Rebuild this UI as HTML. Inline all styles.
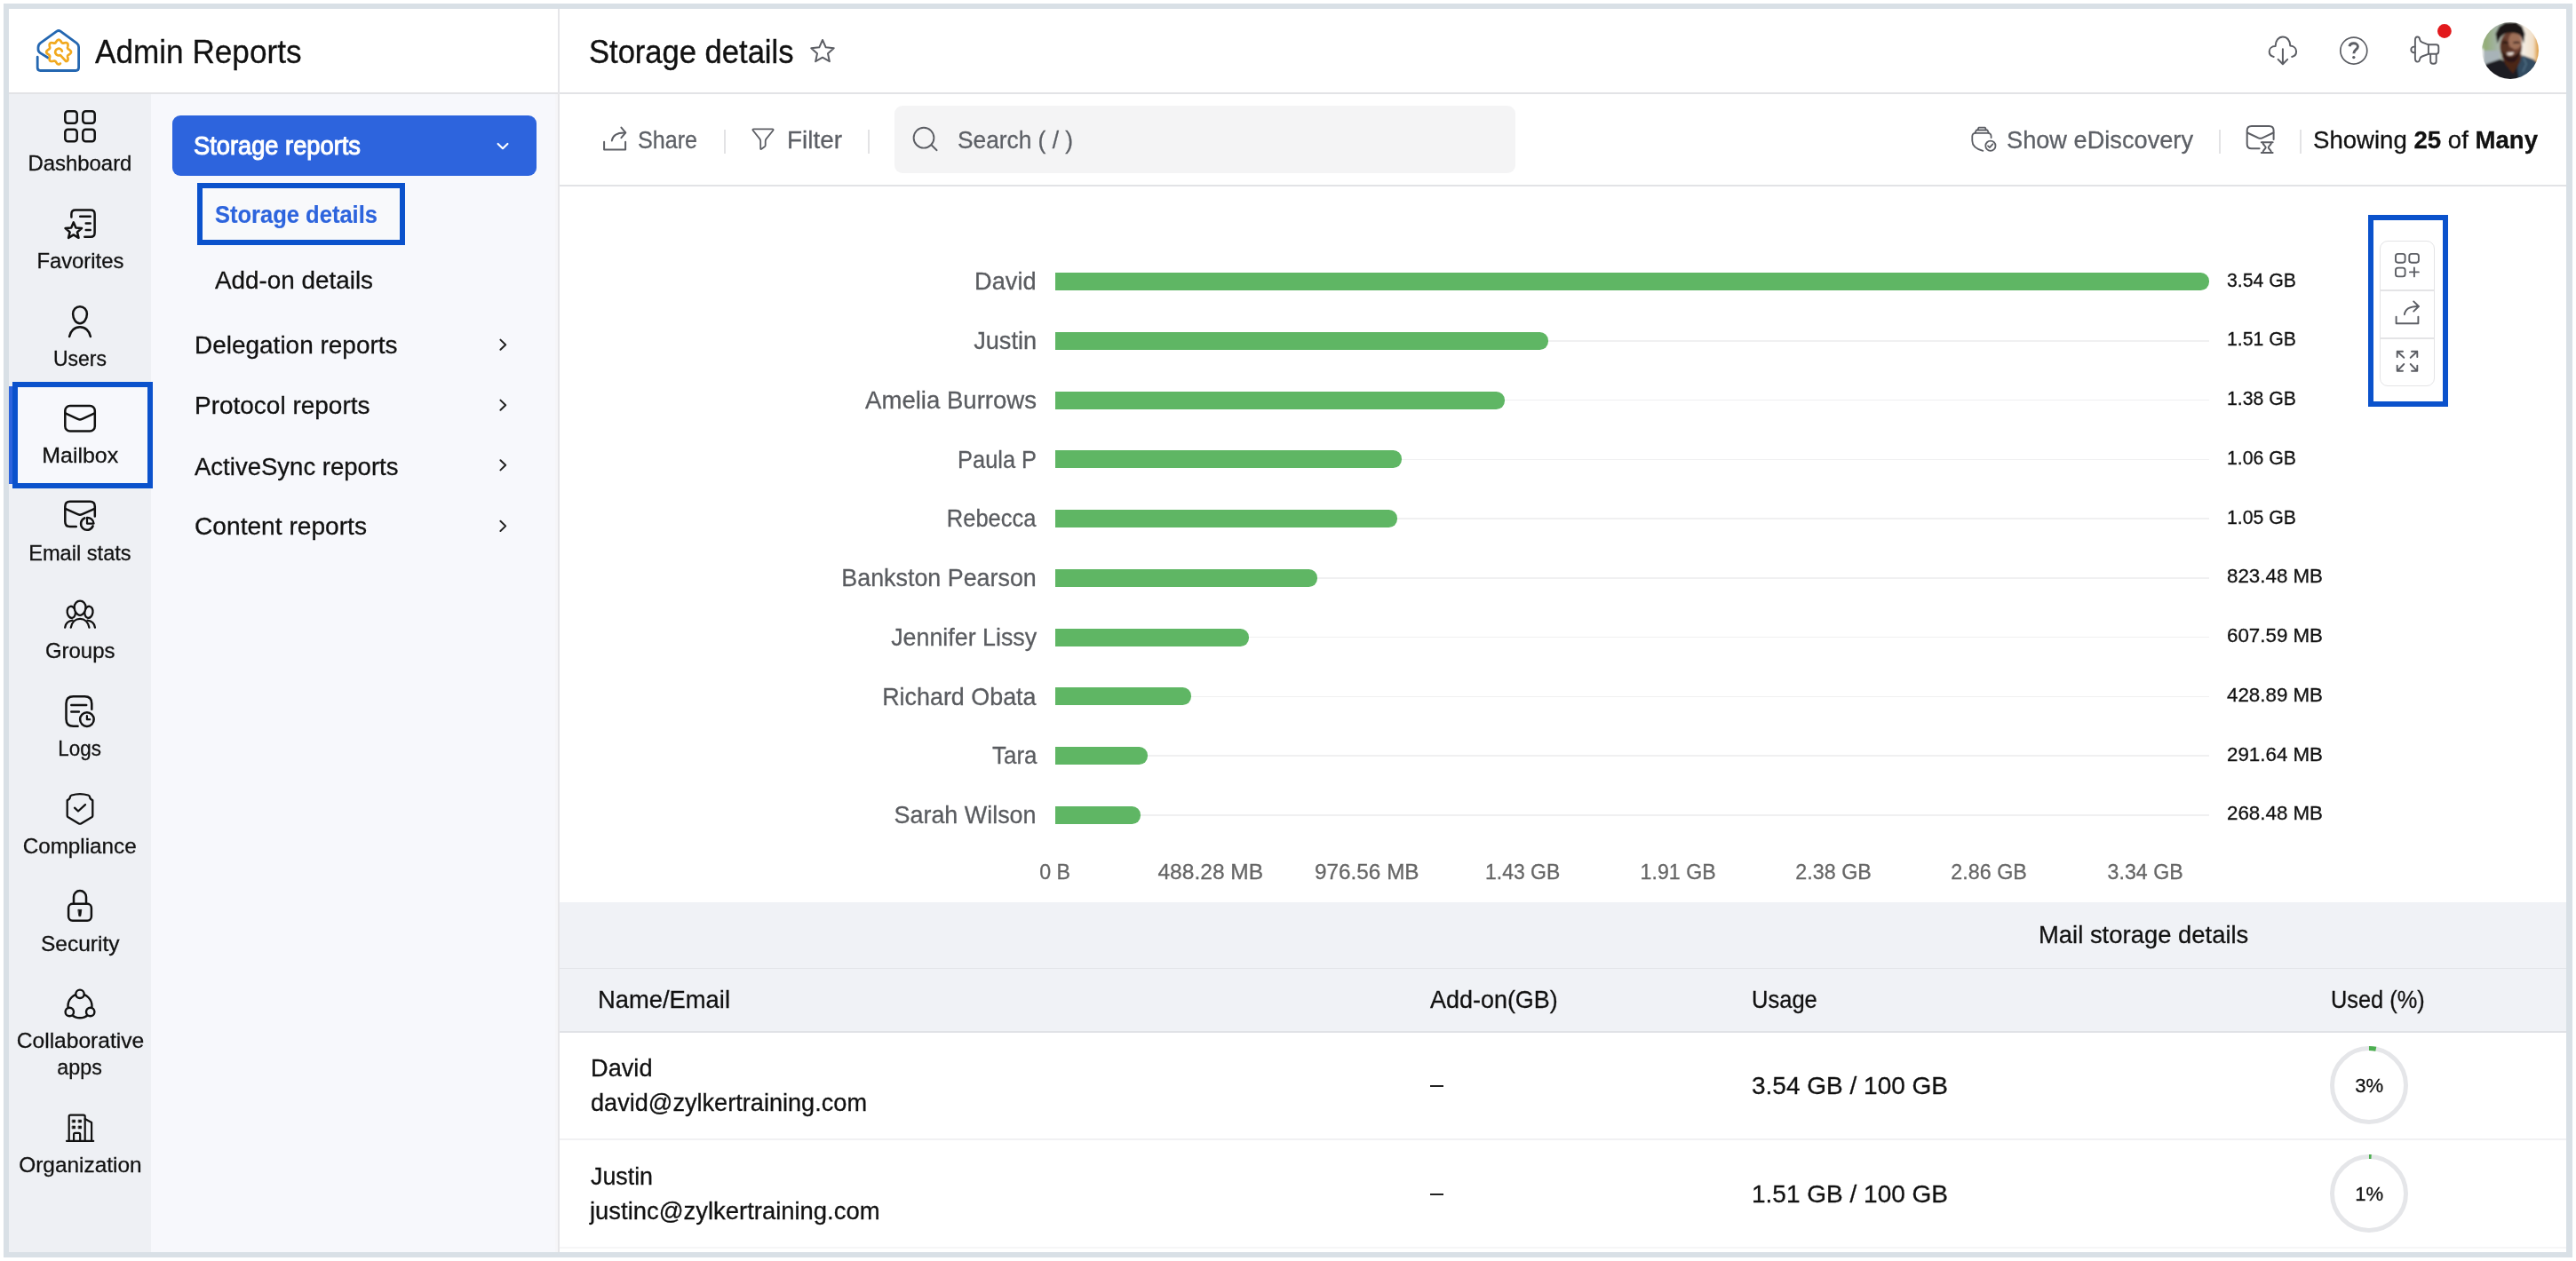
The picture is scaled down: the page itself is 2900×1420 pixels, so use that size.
<!DOCTYPE html>
<html lang="en"><head><meta charset="utf-8"><title>Admin Reports - Storage details</title>
<style>
html,body{margin:0;padding:0;background:#fff;}
body{width:2900px;height:1420px;overflow:hidden;font-family:"Liberation Sans",sans-serif;color:#111;}
#page{position:relative;width:2900px;height:1420px;overflow:hidden;background:#fff;}
#page div,#page span,#page svg{position:absolute;box-sizing:border-box;}
.t{-webkit-text-stroke:0.28px currentColor;white-space:nowrap;line-height:1;font-family:"Liberation Sans",sans-serif;color:#111;}
.t b{font-weight:700;}
svg{overflow:visible;}
.ic{fill:none;stroke:#111;stroke-width:2.6;stroke-linecap:round;stroke-linejoin:round;}
.ig{fill:none;stroke:#5c5e64;stroke-width:2.2;stroke-linecap:round;stroke-linejoin:round;}

</style></head>
<body>
<div id="page">
<!-- outer frame -->
<div style="left:4px;top:4px;width:2892px;height:1412px;border:solid #d9e0e6;border-width:6px 7px 6px 6px;"></div>
<!-- header -->
<div style="left:10px;top:10px;width:2879px;height:94px;background:#fff;"></div>
<div style="left:10px;top:104px;width:2879px;height:2px;background:#e2e3e6;"></div>
<!-- left icon rail -->
<div style="left:10px;top:106px;width:160px;height:1304px;background:#eef0f4;"></div>
<!-- submenu panel -->
<div style="left:170px;top:106px;width:458px;height:1304px;background:#f7f8fc;"></div>
<div style="left:624.5px;top:106px;width:3.5px;height:1304px;background:#f6f6f8;"></div>
<div style="left:628px;top:10px;width:2px;height:1400px;background:#e6e6e9;"></div>
<!-- active rail item -->
<div style="left:10px;top:435px;width:5px;height:110px;background:#2d64dd;"></div>
<div style="left:14px;top:430px;width:158px;height:120px;border:6px solid #0b52cc;background:#f7f8fc;"></div>
<!-- submenu -->
<div style="left:194px;top:130px;width:410px;height:68px;background:#2d64dd;border-radius:9px;"></div>
<div style="left:222px;top:206px;width:234px;height:70px;border:6px solid #0b52cc;background:#f8f9fb;"></div>
<!-- toolbar -->
<div style="left:630px;top:208px;width:2259px;height:2px;background:#e2e3e6;"></div>
<div style="left:815px;top:146px;width:2px;height:27px;background:#e3e3e5;"></div>
<div style="left:977px;top:146px;width:2px;height:27px;background:#e3e3e5;"></div>
<div style="left:2498px;top:146px;width:2px;height:27px;background:#e3e3e5;"></div>
<div style="left:2589px;top:146px;width:2px;height:27px;background:#e3e3e5;"></div>
<div style="left:1007px;top:119px;width:699px;height:76px;background:#f4f4f5;border-radius:9px;"></div>
<!-- chart tool box -->
<div style="left:2666px;top:242px;width:90px;height:216px;border:6px solid #0b52cc;"></div>
<div style="left:2679px;top:271px;width:62px;height:164px;border:1.5px solid #e4e4e6;border-radius:9px;background:#fff;"></div>
<div style="left:2680px;top:326px;width:60px;height:1.5px;background:#e4e4e6;"></div>
<div style="left:2680px;top:380px;width:60px;height:1.5px;background:#e4e4e6;"></div>
<!-- table -->
<div style="left:630px;top:1016px;width:2259px;height:146px;background:#f0f2f6;"></div>
<div style="left:630px;top:1089.5px;width:2259px;height:1.5px;background:#e2e4e8;"></div>
<div style="left:630px;top:1160.5px;width:2259px;height:2px;background:#e0e2e6;"></div>
<div style="left:630px;top:1282px;width:2259px;height:2px;background:#f1f1f3;"></div>
<div style="left:630px;top:1404px;width:2259px;height:2px;background:#f6f6f7;"></div>
<div style="left:1610px;top:1221.5px;width:15px;height:2.5px;background:#222;"></div>
<div style="left:1610px;top:1343.5px;width:15px;height:2.5px;background:#222;"></div>

<div style="left:2482.5px;top:316.40px;width:4.5px;height:1.4px;background:#f0f0f1;"></div>
<div style="left:1187.5px;top:307.00px;width:1299.0px;height:20px;background:#5fb664;border-radius:0 9.5px 9.5px 0;"></div>
<div style="left:1739px;top:383.15px;width:748px;height:1.4px;background:#f0f0f1;"></div>
<div style="left:1187.5px;top:373.75px;width:555.5px;height:20px;background:#5fb664;border-radius:0 9.5px 9.5px 0;"></div>
<div style="left:1689.75px;top:449.90px;width:797.25px;height:1.4px;background:#f0f0f1;"></div>
<div style="left:1187.5px;top:440.50px;width:506.25px;height:20px;background:#5fb664;border-radius:0 9.5px 9.5px 0;"></div>
<div style="left:1573.5px;top:516.65px;width:913.5px;height:1.4px;background:#f0f0f1;"></div>
<div style="left:1187.5px;top:507.25px;width:390.0px;height:20px;background:#5fb664;border-radius:0 9.5px 9.5px 0;"></div>
<div style="left:1569.25px;top:583.40px;width:917.75px;height:1.4px;background:#f0f0f1;"></div>
<div style="left:1187.5px;top:574.00px;width:385.75px;height:20px;background:#5fb664;border-radius:0 9.5px 9.5px 0;"></div>
<div style="left:1479px;top:650.15px;width:1008px;height:1.4px;background:#f0f0f1;"></div>
<div style="left:1187.5px;top:640.75px;width:295.5px;height:20px;background:#5fb664;border-radius:0 9.5px 9.5px 0;"></div>
<div style="left:1401.6px;top:716.90px;width:1085.4px;height:1.4px;background:#f0f0f1;"></div>
<div style="left:1187.5px;top:707.50px;width:218.0999999999999px;height:20px;background:#5fb664;border-radius:0 9.5px 9.5px 0;"></div>
<div style="left:1337.1px;top:783.65px;width:1149.9px;height:1.4px;background:#f0f0f1;"></div>
<div style="left:1187.5px;top:774.25px;width:153.5999999999999px;height:20px;background:#5fb664;border-radius:0 9.5px 9.5px 0;"></div>
<div style="left:1288px;top:850.40px;width:1199px;height:1.4px;background:#f0f0f1;"></div>
<div style="left:1187.5px;top:841.00px;width:104.5px;height:20px;background:#5fb664;border-radius:0 9.5px 9.5px 0;"></div>
<div style="left:1279.5px;top:917.15px;width:1207.5px;height:1.4px;background:#f0f0f1;"></div>
<div style="left:1187.5px;top:907.75px;width:96.0px;height:20px;background:#5fb664;border-radius:0 9.5px 9.5px 0;"></div>
<svg style="left:2617px;top:1172px" width="100" height="100" viewBox="2617 1172 100 100"><circle cx="2667" cy="1222" r="41.5" fill="none" stroke="#e5e6e9" stroke-width="5"/><path d="M2667 1180.5 A41.5 41.5 0 0 1 2674.78 1181.24" fill="none" stroke="#4caf50" stroke-width="5"/></svg>
<svg style="left:2617px;top:1294px" width="100" height="100" viewBox="2617 1294 100 100"><circle cx="2667" cy="1344" r="41.5" fill="none" stroke="#e5e6e9" stroke-width="5"/><path d="M2667 1302.5 A41.5 41.5 0 0 1 2669.61 1302.58" fill="none" stroke="#4caf50" stroke-width="5"/></svg>
<svg style="left:0;top:0" width="2900" height="1420" viewBox="0 0 2900 1420">
<g fill="none" stroke-linecap="round" stroke-linejoin="round" stroke-width="2.8">
<path stroke="#2467b1" d="M42.2 64.2 V76.3 Q42.2 79.5 45.4 79.5 H85.4 Q88.6 79.5 88.6 76.3 V53 Q88.6 50.2 86.4 48.6 L68 35.2 Q66 33.7 64 35.2 L45.6 48.3 Q43 50.2 43 53.4 V55.5 Q43 58.2 45.3 59.6 L54 65"/>
<path stroke="#f1a91f" stroke-width="2.7" d="M67.92 71.53 L67.28 72.10 L66.58 72.43 L65.86 72.48 L65.15 72.24 L64.49 71.74 L63.90 71.07 L63.39 70.33 L62.94 69.63 L62.49 69.07 L62.02 68.71 L61.46 68.56 L60.79 68.60 L60.00 68.75 L59.14 68.92 L58.24 69.03 L57.39 68.98 L56.66 68.72 L56.11 68.25 L55.78 67.57 L55.67 66.75 L55.73 65.86 L55.89 64.98 L56.06 64.16 L56.15 63.46 L56.06 62.86 L55.77 62.36 L55.27 61.91 L54.61 61.46 L53.88 60.98 L53.17 60.42 L52.60 59.78 L52.27 59.08 L52.22 58.36 L52.46 57.65 L52.96 56.99 L53.63 56.40 L54.37 55.89 L55.07 55.44 L55.63 54.99 L55.99 54.52 L56.14 53.96 L56.10 53.29 L55.95 52.50 L55.78 51.64 L55.67 50.74 L55.72 49.89 L55.98 49.16 L56.45 48.61 L57.13 48.28 L57.95 48.17 L58.84 48.23 L59.72 48.39 L60.54 48.56 L61.24 48.65 L61.84 48.56 L62.34 48.27 L62.79 47.77 L63.24 47.11 L63.72 46.38 L64.28 45.67 L64.92 45.10 L65.62 44.77 L66.34 44.72 L67.05 44.96 L67.71 45.46 L68.30 46.13 L68.81 46.87 L69.26 47.57 L69.71 48.13 L70.18 48.49 L70.74 48.64 L71.41 48.60 L72.20 48.45 L73.06 48.28 L73.96 48.17 L74.81 48.22 L75.54 48.48 L76.09 48.95 L76.42 49.63 L76.53 50.45 L76.47 51.34 L76.31 52.22 L76.14 53.04 L76.05 53.74 L76.14 54.34 L76.43 54.84 L76.93 55.29 L77.59 55.74 L78.32 56.22 L79.03 56.78 L79.60 57.42 L79.93 58.12 L79.98 58.84 L79.74 59.55 L79.24 60.21 L78.57 60.80 L77.83 61.31 L77.13 61.76 L76.57 62.21 L76.21 62.68 L76.06 63.24 L76.10 63.91 L76.25 64.70 L76.42 65.56 L76.53 66.46 L76.48 67.31 L76.22 68.04 L75.75 68.59 L75.07 68.92 L74.25 69.03 L67.93 62.04 A3.9 3.9 0 1 1 69.87 57.59"/>
</g>
<g class="ic" style="stroke-width:2.5">
<rect x="73.3" y="125.3" width="13.4" height="13.4" rx="3.2"/>
<rect x="73.3" y="145.8" width="13.4" height="13.4" rx="3.2"/>
<rect x="93.3" y="125.3" width="13.4" height="13.4" rx="3.2"/>
<rect x="93.3" y="145.8" width="13.4" height="13.4" rx="3.2"/>
<path d="M80.4 244.4 V241 Q80.4 236.5 84.9 236.5 H102.1 Q106.6 236.5 106.6 241 V262.2 Q106.6 266.7 102.1 266.7 H95.3"/>
<path d="M90.2 243.7 H101.7 M96.7 251.4 H101.7 M96.7 258.9 H101.7"/>
<path d="M82.80 250.30 L85.39 256.44 L92.03 257.00 L86.98 261.36 L88.50 267.85 L82.80 264.40 L77.10 267.85 L78.62 261.36 L73.57 257.00 L80.21 256.44Z"/>
<path d="M90 345.3 C94.6 345.3 97.9 349 97.9 353.6 C97.9 359 94.4 364.2 90 364.2 C85.6 364.2 82.1 359 82.1 353.6 C82.1 349 85.4 345.3 90 345.3 Z"/>
<path d="M78.1 379 C79.3 372.6 84 368.3 90 368.3 C96 368.3 100.7 372.6 101.9 379"/>
<rect x="73.3" y="457.1" width="33.5" height="28.4" rx="5.5"/>
<path d="M73.6 465.4 L87.6 471.9 Q90 473 92.4 471.9 L106.5 465.4"/>
<path d="M106.8 581.6 V570.2 Q106.8 564.7 101.3 564.7 H78.8 Q73.3 564.7 73.3 570.2 V587.6 Q73.3 593.1 78.8 593.1 H85.8"/>
<path d="M73.6 572.8 L87.6 579.1 Q90 580.2 92.4 579.1 L106.5 572.8"/>
<path d="M95.3 583.4 A7 7 0 1 0 104.6 592.3"/>
<path d="M98 582.8 V589.6 H105.6 A7.4 7.4 0 0 0 98 582.8 Z" style="stroke-width:2.2"/>
<ellipse cx="80.3" cy="689.3" rx="4.6" ry="6.6" transform="rotate(-8 80.3 689.3)" style="stroke-width:2.3"/>
<ellipse cx="99.9" cy="689.3" rx="4.6" ry="6.6" transform="rotate(8 99.9 689.3)" style="stroke-width:2.3"/>
<path d="M90.1 676.6 C93.8 676.6 96.5 679.8 96.5 683.6 C96.5 688.2 93.7 692.8 90.1 692.8 C86.5 692.8 83.7 688.2 83.7 683.6 C83.7 679.8 86.4 676.6 90.1 676.6 Z" fill="#eef0f4" style="fill:#eef0f4;stroke-width:2.3"/>
<path d="M79.8 706.6 C80.8 700.8 84.8 696.8 90.1 696.8 C95.4 696.8 99.4 700.8 100.4 706.6" style="stroke-width:2.3"/>
<path d="M73.2 706.6 C73.9 702.2 77 699.2 81.6 698.7 M106.9 706.6 C106.2 702.2 103.1 699.2 98.5 698.7" style="stroke-width:2.3"/>
<path d="M103.3 798.8 V792.3 Q103.3 784.3 95.3 784.3 H82.5 Q74.5 784.3 74.5 792.3 V809.7 Q74.5 817.7 82.5 817.7 H87.6"/>
<path d="M80.3 794 H97.2 M80.3 801.4 H88.9"/>
<circle cx="97.9" cy="810.1" r="7.8"/>
<path d="M97.9 806.2 V810.2 H101.2" style="stroke-width:2.2"/>
<path d="M75.7 901.2 Q78.6 900.2 78.9 897.6 Q79 896 80.6 895.5 Q90 892.6 99.4 895.5 Q101 896 101.1 897.6 Q101.4 900.2 104.3 901.2 V918.4 Q104.3 919.6 103.2 920.3 L91.6 927.2 Q90 928.1 88.4 927.2 L76.8 920.3 Q75.7 919.6 75.7 918.4 Z" style="stroke-width:2.3"/>
<path d="M84 909.7 L88 913.5 L96 906.1" style="stroke-width:2.3"/>
<rect x="77.1" y="1017.8" width="25.8" height="18.9" rx="4.6"/>
<path d="M83 1017.6 V1010.1 A7 7 0 0 1 97 1010.1 V1017.6"/>
<path d="M88.2 1024.4 H91.8 L90.8 1031.7 H89.2 Z" style="fill:#111;stroke-width:0.8"/>
<circle cx="90" cy="1132.8" r="13.5" style="stroke-width:2.4"/>
<circle cx="90" cy="1119.3" r="4.7" style="fill:#eef0f4;stroke-width:2.4"/>
<circle cx="78.3" cy="1139.5" r="4.7" style="fill:#eef0f4;stroke-width:2.4"/>
<circle cx="101.7" cy="1139.5" r="4.7" style="fill:#eef0f4;stroke-width:2.4"/>
<g style="stroke-width:2.2">
<path d="M75 1284.9 H105.2"/>
<path d="M77.7 1284.5 V1257.3 Q77.7 1255.6 79.4 1255.6 H94 Q95.7 1255.6 95.7 1257.3 V1284.5"/>
<path d="M95.7 1260.1 L103.1 1263.9 V1284.5"/>
<path d="M83.1 1284.5 V1277.4 Q83.1 1275.8 84.7 1275.8 H88.6 Q90.2 1275.8 90.2 1277.4 V1284.5"/>
<rect x="81.5" y="1261.1" width="3.2" height="2.9" style="fill:#111;stroke-width:0.6"/>
<rect x="81.5" y="1268" width="3.2" height="2.9" style="fill:#111;stroke-width:0.6"/>
<rect x="88.4" y="1261.1" width="3.2" height="2.9" style="fill:#111;stroke-width:0.6"/>
<rect x="88.4" y="1268" width="3.2" height="2.9" style="fill:#111;stroke-width:0.6"/>
</g>
</g>
<path d="M560.6 162 L566 167.2 L571.4 162" fill="none" stroke="#fff" stroke-width="2.2" stroke-linecap="round" stroke-linejoin="round"/>
<path d="M563.4 382.59999999999997 L569.2 388.2 L563.4 393.8" fill="none" stroke="#222" stroke-width="2" stroke-linecap="round" stroke-linejoin="round"/>
<path d="M563.4 450.59999999999997 L569.2 456.2 L563.4 461.8" fill="none" stroke="#222" stroke-width="2" stroke-linecap="round" stroke-linejoin="round"/>
<path d="M563.4 518.1999999999999 L569.2 523.8 L563.4 529.4" fill="none" stroke="#222" stroke-width="2" stroke-linecap="round" stroke-linejoin="round"/>
<path d="M563.4 586.8 L569.2 592.4 L563.4 598.0" fill="none" stroke="#222" stroke-width="2" stroke-linecap="round" stroke-linejoin="round"/>
<g class="ig" style="stroke-width:2">
<path d="M926.00 45.00 L929.70 53.30 L938.74 54.26 L931.99 60.35 L933.88 69.24 L926.00 64.70 L918.12 69.24 L920.01 60.35 L913.26 54.26 L922.30 53.30Z" style="stroke-width:2;stroke-linejoin:round"/>
<path d="M680.1 159.8 V168.5 H704.1 V159.8"/>
<path d="M688.8 158.4 C689.8 152.6 695.2 149.2 703.6 149.4"/>
<path d="M699.4 143.6 L704.3 149.4 L699.4 155.2"/>
<path d="M848.6 145.4 H869.4 Q871.4 145.4 870.2 147 L862.6 156.4 Q861.7 157.6 861.7 159 V163.4 Q861.7 164.6 860.7 165.3 L857.3 167.8 Q856.2 168.6 856.2 167.2 V159 Q856.2 157.6 855.3 156.4 L847.8 147 Q846.6 145.4 848.6 145.4 Z" style="stroke-width:1.8"/>
<circle cx="1040" cy="155.2" r="11.4" style="stroke-width:1.9"/>
<path d="M1048.6 163.3 L1054.6 169.2" style="stroke-width:1.9"/>
<g style="stroke-width:1.8">
<path d="M2241.6 155 V153.6 Q2241.6 149.8 2237.8 149.8 H2224.1 Q2220.3 149.8 2220.3 153.6 V158.4 C2220.3 163.6 2225 167.8 2232.4 169.8"/>
<path d="M2223.4 149.6 L2225 146.5 H2237.3 L2238.9 149.6 M2226.3 146.3 L2227.6 143.6 H2234.8 L2236.1 146.3"/>
<circle cx="2240.9" cy="164.2" r="5.6"/>
<path d="M2238 164.3 L2239.9 166.1 L2243.3 162.3"/>
</g>
<g style="stroke-width:2">
<path d="M2559.6 157 V147 Q2559.6 141.9 2554.5 141.9 H2534.8 Q2529.7 141.9 2529.7 147 V162.2 Q2529.7 167.3 2534.8 167.3 H2543.6"/>
<path d="M2530 149.5 L2542.4 155.3 Q2544.6 156.3 2546.8 155.3 L2559.3 149.5"/>
<path d="M2545.8 160.3 H2558.6 M2545.8 171.9 H2558.6"/>
<path d="M2547.4 160.6 C2547.6 163.4 2550.7 164.6 2550.7 166.1 C2550.7 167.6 2547.6 168.8 2547.4 171.6 M2557 160.6 C2556.8 163.4 2553.7 164.6 2553.7 166.1 C2553.7 167.6 2556.8 168.8 2557 171.6"/>
</g>
<g style="stroke-width:2">
<path d="M2559.8 63.9 C2556.6 63.3 2554.7 60.8 2554.7 58 C2554.7 54.8 2557.2 52.2 2561.6 52.1 C2561.6 45.8 2565.2 41.4 2569.9 41.4 C2574.6 41.4 2578.2 45.6 2578.3 51.6 C2582.6 51.8 2585.1 54.7 2585.1 58 C2585.1 60.8 2583.3 63.3 2580.1 63.9"/>
<path d="M2569.9 55.3 V72 M2564.6 66.9 L2569.9 72.2 L2575.2 66.9"/>
</g>
<circle cx="2649.8" cy="57.1" r="15" style="stroke-width:1.7"/>
<path d="M2645 52.2 C2645.4 49.8 2647.4 48.8 2649.8 48.8 C2652.4 48.8 2654.4 50.3 2654.4 52.5 C2654.4 55.6 2650 55.8 2649.8 60.2" style="stroke-width:2.9;stroke-linecap:butt"/>
<circle cx="2649.8" cy="64.6" r="1.7" style="fill:#5c5e64;stroke:none"/>
<g style="stroke-width:1.9">
<path d="M2721.5 41.5 C2723.3 41.5 2724 43 2724.2 44.6 C2724.4 46.2 2725.3 47 2726.8 47.6 L2733.9 50.3 V60.8 L2726.8 63.5 C2725.3 64.1 2724.4 64.9 2724.2 66.5 C2724 68.1 2723.3 69.6 2721.5 69.6 C2719.6 69.6 2718.9 67.8 2718.9 65.6 V45.5 C2718.9 43.3 2719.6 41.5 2721.5 41.5 Z"/>
<path d="M2718.7 52.6 H2717.6 A3.3 3.3 0 0 0 2717.6 59.2 H2718.7"/>
<path d="M2733.9 50.3 H2742.6 Q2745.3 50.3 2745.3 53 V58.1 Q2745.3 60.8 2742.6 60.8 H2733.9"/>
<path d="M2736.2 60.9 V69.1 Q2736.2 71.8 2738.9 71.8 H2740 Q2742.7 71.8 2742.7 69.1 V60.9"/>
</g>
<g style="stroke-width:1.9">
<rect x="2697" y="285.9" width="10.6" height="9.8" rx="2.6"/>
<rect x="2712.3" y="285.9" width="10.6" height="9.8" rx="2.6"/>
<rect x="2697" y="301.6" width="10.6" height="9.8" rx="2.6"/>
<path d="M2712.9 306.4 H2722.9 M2717.9 301.4 V311.4"/>
<path d="M2697.6 356.6 V364.3 H2722.4 V356.6"/>
<path d="M2706.9 354.2 C2707.6 348.8 2712.6 344.8 2722.6 345"/>
<path d="M2717.2 339.4 L2722.9 345 L2717.2 350.6"/>
<path d="M2706.3 402.8 L2698.7 395.8 M2698.7 402 V395.8 H2705 M2713.7 402.8 L2721.3 395.8 M2715 395.8 H2721.3 V402 M2706.3 410 L2698.7 417.8 M2698.7 411.6 V417.8 H2705 M2713.7 410 L2721.3 417.8 M2715 417.8 H2721.3 V411.6"/>
</g>
</g>
<circle cx="2751.9" cy="35" r="7.9" fill="#e2191c"/>
</svg>
<svg style="left:2794px;top:24.8px" width="64" height="64" viewBox="0 0 64 64">
<defs><clipPath id="avc"><circle cx="32" cy="32" r="31.9"/></clipPath><filter id="avb" x="-20%" y="-20%" width="140%" height="140%"><feGaussianBlur stdDeviation="0.9"/></filter><linearGradient id="avbg" x1="0" x2="1" y1="0" y2="0"><stop offset="0" stop-color="#c9cfc6"/><stop offset="0.1" stop-color="#93ad76"/><stop offset="0.28" stop-color="#a3b3a4"/><stop offset="0.45" stop-color="#c9ccc4"/><stop offset="0.7" stop-color="#f4eee5"/><stop offset="0.86" stop-color="#f1dfc8"/><stop offset="0.94" stop-color="#dc9a3e"/><stop offset="1" stop-color="#cf862a"/></linearGradient></defs>
<g clip-path="url(#avc)"><g filter="url(#avb)">
<rect x="-4" y="-4" width="72" height="72" fill="url(#avbg)"/>
<rect x="-2" y="32" width="22" height="16" fill="#a8b3b8"/>
<rect x="-2" y="30" width="4" height="16" fill="#eef0ee"/>
<path d="M-2 52 L6 46.5 L21 41.5 L33 48 L46 37.5 L58 42 L68 50 V70 H-2 Z" fill="#1c1e21"/>
<path d="M43 40 L46.5 37.5 L58 42 L64 48 L54 60 L42 66 L40 52 Z" fill="#304b60"/>
<path d="M47 40 L50 47 L46 56" stroke="#56748a" stroke-width="1.4" fill="none"/>
<path d="M22 38 L45 36 L43 45 L35 58 L27 48 Z" fill="#4c2518"/>
<path d="M17.5 24 L15.5 13 L19.5 5 L26 0.5 L39 0 L45.5 5 L48.5 13 L47 24 L44.5 17 L40 12.5 L26 12.5 L21 17 Z" fill="#1a1816"/>
<ellipse cx="32.8" cy="27.5" rx="12.4" ry="17" fill="#6b4130"/>
<ellipse cx="37.5" cy="21" rx="7.5" ry="9.5" fill="#a4745e" opacity="0.9"/>
<ellipse cx="25.5" cy="29" rx="4.5" ry="10" fill="#4a2a1e" opacity="0.7"/>
<path d="M21.5 15 Q32 8.5 44.5 15 L45.5 11 Q32 5 20 11 Z" fill="#1a1816"/>
<path d="M23 23.4 Q26.5 22 30 23.4 M35.5 23.4 Q39 22 42.5 23.4" stroke="#24140e" stroke-width="1.7" fill="none"/>
<path d="M30.5 29.5 Q32.5 31 35 29.5" stroke="#3a2015" stroke-width="1.2" fill="none"/>
<path d="M22.5 32 Q32 47 43.5 31 Q42 44.5 32.8 45.5 Q24 44.5 22.5 32 Z" fill="#2a1812"/>
<path d="M27.6 34.4 Q32 33.7 36.2 34 Q35 37.2 31.7 37.2 Q28.8 37.2 27.6 34.4 Z" fill="#e9ddd6"/>
</g></g></svg>
<span class="t" style="left:107.00px;transform-origin:0 0;top:39.68px;font-size:37px;transform:scaleX(0.9501)">Admin Reports</span>
<span class="t" style="left:662.50px;transform-origin:0 0;top:39.68px;font-size:37px;-webkit-text-stroke:0.4px #111;transform:scaleX(0.9338)">Storage details</span>
<span class="t" style="left:30.07px;transform-origin:50% 0;top:171.76px;font-size:24.5px;transform:scaleX(0.9761)">Dashboard</span>
<span class="t" style="left:39.62px;transform-origin:50% 0;top:281.76px;font-size:24.5px;transform:scaleX(0.9726)">Favorites</span>
<span class="t" style="left:58.01px;transform-origin:50% 0;top:391.76px;font-size:24.5px;transform:scaleX(0.9377)">Users</span>
<span class="t" style="left:47.78px;transform-origin:50% 0;top:501.26px;font-size:24.5px;transform:scaleX(1.0185)">Mailbox</span>
<span class="t" style="left:30.09px;transform-origin:50% 0;top:611.26px;font-size:24.5px;transform:scaleX(0.9640)">Email stats</span>
<span class="t" style="left:49.83px;transform-origin:50% 0;top:721.26px;font-size:24.5px;transform:scaleX(0.9771)">Groups</span>
<span class="t" style="left:63.43px;transform-origin:50% 0;top:831.26px;font-size:24.5px;transform:scaleX(0.9127)">Logs</span>
<span class="t" style="left:25.31px;transform-origin:50% 0;top:941.26px;font-size:24.5px;transform:scaleX(0.9894)">Compliance</span>
<span class="t" style="left:45.74px;transform-origin:50% 0;top:1050.76px;font-size:24.5px;transform:scaleX(0.9998)">Security</span>
<span class="t" style="left:18.50px;transform-origin:50% 0;top:1160.26px;font-size:24.5px;transform:scaleX(1.0035)">Collaborative</span>
<span class="t" style="left:63.43px;transform-origin:50% 0;top:1189.76px;font-size:24.5px;transform:scaleX(0.9503)">apps</span>
<span class="t" style="left:20.54px;transform-origin:50% 0;top:1300.26px;font-size:24.5px;transform:scaleX(0.9970)">Organization</span>
<span class="t" style="left:218.00px;transform-origin:0 0;top:150.05px;font-size:29px;color:#fff;-webkit-text-stroke:1.05px #fff;transform:scaleX(0.9405)">Storage reports</span>
<span class="t" style="left:242.00px;transform-origin:0 0;top:226.87px;font-size:28.5px;font-weight:700;color:#2d64dd;-webkit-text-stroke:0.2px #2d64dd;transform:scaleX(0.8956)">Storage details</span>
<span class="t" style="left:242.00px;transform-origin:0 0;top:302.22px;font-size:27.5px;transform:scaleX(1.0124)">Add-on details</span>
<span class="t" style="left:218.50px;transform-origin:0 0;top:375.47px;font-size:27.5px;transform:scaleX(1.0168)">Delegation reports</span>
<span class="t" style="left:218.50px;transform-origin:0 0;top:443.47px;font-size:27.5px;transform:scaleX(1.0174)">Protocol reports</span>
<span class="t" style="left:218.50px;transform-origin:0 0;top:511.72px;font-size:27.5px;transform:scaleX(1.0010)">ActiveSync reports</span>
<span class="t" style="left:218.50px;transform-origin:0 0;top:579.22px;font-size:27.5px;transform:scaleX(1.0235)">Content reports</span>
<span class="t" style="left:718.00px;transform-origin:0 0;top:143.72px;font-size:27.5px;color:#5d6066;transform:scaleX(0.9129)">Share</span>
<span class="t" style="left:885.50px;transform-origin:0 0;top:143.72px;font-size:27.5px;color:#5d6066;transform:scaleX(1.0143)">Filter</span>
<span class="t" style="left:1078.00px;transform-origin:0 0;top:143.72px;font-size:27.5px;color:#5d6066;transform:scaleX(0.9558)">Search ( / )</span>
<span class="t" style="left:2259.00px;transform-origin:0 0;top:143.72px;font-size:27.5px;color:#5d6066;transform:scaleX(0.9885)">Show eDiscovery</span>
<span class="t" style="left:2604.00px;transform-origin:0 0;top:143.72px;font-size:27.5px;transform:scaleX(1.0030)">Showing <b>25</b> of <b>Many</b></span>
<span class="t" style="left:1095.41px;transform-origin:100% 0;top:303.30px;font-size:28px;color:#5a5c60;transform:scaleX(0.9708)">David</span>
<span class="t" style="left:1093.84px;transform-origin:100% 0;top:370.05px;font-size:28px;color:#5a5c60;transform:scaleX(0.9705)">Justin</span>
<span class="t" style="left:970.94px;transform-origin:100% 0;top:436.80px;font-size:28px;color:#5a5c60;transform:scaleX(0.9844)">Amelia Burrows</span>
<span class="t" style="left:1068.92px;transform-origin:100% 0;top:503.55px;font-size:28px;color:#5a5c60;transform:scaleX(0.9074)">Paula P</span>
<span class="t" style="left:1056.48px;transform-origin:100% 0;top:570.30px;font-size:28px;color:#5a5c60;transform:scaleX(0.9112)">Rebecca</span>
<span class="t" style="left:938.19px;transform-origin:100% 0;top:637.05px;font-size:28px;color:#5a5c60;transform:scaleX(0.9593)">Bankston Pearson</span>
<span class="t" style="left:995.81px;transform-origin:100% 0;top:703.80px;font-size:28px;color:#5a5c60;transform:scaleX(0.9580)">Jennifer Lissy</span>
<span class="t" style="left:986.45px;transform-origin:100% 0;top:770.55px;font-size:28px;color:#5a5c60;transform:scaleX(0.9604)">Richard Obata</span>
<span class="t" style="left:1112.53px;transform-origin:100% 0;top:837.30px;font-size:28px;color:#5a5c60;transform:scaleX(0.9253)">Tara</span>
<span class="t" style="left:1000.48px;transform-origin:100% 0;top:904.05px;font-size:28px;color:#5a5c60;transform:scaleX(0.9609)">Sarah Wilson</span>
<span class="t" style="left:2506.80px;transform-origin:0 0;top:305.50px;font-size:21.5px;transform:scaleX(0.9887)">3.54 GB</span>
<span class="t" style="left:2506.80px;transform-origin:0 0;top:372.25px;font-size:21.5px;transform:scaleX(0.9887)">1.51 GB</span>
<span class="t" style="left:2506.80px;transform-origin:0 0;top:439.00px;font-size:21.5px;transform:scaleX(0.9887)">1.38 GB</span>
<span class="t" style="left:2506.80px;transform-origin:0 0;top:505.75px;font-size:21.5px;transform:scaleX(0.9887)">1.06 GB</span>
<span class="t" style="left:2506.80px;transform-origin:0 0;top:572.50px;font-size:21.5px;transform:scaleX(0.9887)">1.05 GB</span>
<span class="t" style="left:2506.80px;transform-origin:0 0;top:639.25px;font-size:21.5px;transform:scaleX(1.0386)">823.48 MB</span>
<span class="t" style="left:2506.80px;transform-origin:0 0;top:706.00px;font-size:21.5px;transform:scaleX(1.0386)">607.59 MB</span>
<span class="t" style="left:2506.80px;transform-origin:0 0;top:772.75px;font-size:21.5px;transform:scaleX(1.0386)">428.89 MB</span>
<span class="t" style="left:2506.80px;transform-origin:0 0;top:839.50px;font-size:21.5px;transform:scaleX(1.0386)">291.64 MB</span>
<span class="t" style="left:2506.80px;transform-origin:0 0;top:906.25px;font-size:21.5px;transform:scaleX(1.0386)">268.48 MB</span>
<span class="t" style="left:1170.36px;transform-origin:50% 0;top:970.71px;font-size:23.5px;color:#666;transform:scaleX(0.9849)">0 B</span>
<span class="t" style="left:1306.42px;transform-origin:50% 0;top:970.71px;font-size:23.5px;color:#666;transform:scaleX(1.0448)">488.28 MB</span>
<span class="t" style="left:1481.67px;transform-origin:50% 0;top:970.71px;font-size:23.5px;color:#666;transform:scaleX(1.0338)">976.56 MB</span>
<span class="t" style="left:1670.63px;transform-origin:50% 0;top:970.71px;font-size:23.5px;color:#666;transform:scaleX(0.9770)">1.43 GB</span>
<span class="t" style="left:1845.88px;transform-origin:50% 0;top:970.71px;font-size:23.5px;color:#666;transform:scaleX(0.9857)">1.91 GB</span>
<span class="t" style="left:2021.13px;transform-origin:50% 0;top:970.71px;font-size:23.5px;color:#666;transform:scaleX(0.9915)">2.38 GB</span>
<span class="t" style="left:2196.38px;transform-origin:50% 0;top:970.71px;font-size:23.5px;color:#666;transform:scaleX(0.9915)">2.86 GB</span>
<span class="t" style="left:2371.63px;transform-origin:50% 0;top:970.71px;font-size:23.5px;color:#666;transform:scaleX(0.9857)">3.34 GB</span>
<span class="t" style="left:2295.00px;transform-origin:0 0;top:1039.42px;font-size:27.5px;transform:scaleX(0.9974)">Mail storage details</span>
<span class="t" style="left:673.00px;transform-origin:0 0;top:1112.47px;font-size:27.5px;transform:scaleX(0.9949)">Name/Email</span>
<span class="t" style="left:1610.00px;transform-origin:0 0;top:1112.22px;font-size:27.5px;transform:scaleX(0.9797)">Add-on(GB)</span>
<span class="t" style="left:1971.50px;transform-origin:0 0;top:1111.72px;font-size:27.5px;transform:scaleX(0.9283)">Usage</span>
<span class="t" style="left:2624.00px;transform-origin:0 0;top:1111.72px;font-size:27.5px;transform:scaleX(0.9214)">Used (%)</span>
<span class="t" style="left:665.00px;transform-origin:0 0;top:1189.22px;font-size:27.5px;transform:scaleX(0.9884)">David</span>
<span class="t" style="left:665.00px;transform-origin:0 0;top:1227.97px;font-size:27.5px;transform:scaleX(0.9865)">david@zylkertraining.com</span>
<span class="t" style="left:1971.50px;transform-origin:0 0;top:1209.42px;font-size:27.5px;transform:scaleX(1.0181)">3.54 GB / 100 GB</span>
<span class="t" style="left:2650.73px;transform-origin:50% 0;top:1211.95px;font-size:22.5px;transform:scaleX(0.9837)">3%</span>
<span class="t" style="left:664.50px;transform-origin:0 0;top:1311.22px;font-size:27.5px;transform:scaleX(0.9743)">Justin</span>
<span class="t" style="left:664.00px;transform-origin:0 0;top:1350.47px;font-size:27.5px;transform:scaleX(0.9970)">justinc@zylkertraining.com</span>
<span class="t" style="left:1971.50px;transform-origin:0 0;top:1331.42px;font-size:27.5px;transform:scaleX(1.0181)">1.51 GB / 100 GB</span>
<span class="t" style="left:2650.73px;transform-origin:50% 0;top:1333.95px;font-size:22.5px;transform:scaleX(0.9837)">1%</span>
</div>
</body></html>
